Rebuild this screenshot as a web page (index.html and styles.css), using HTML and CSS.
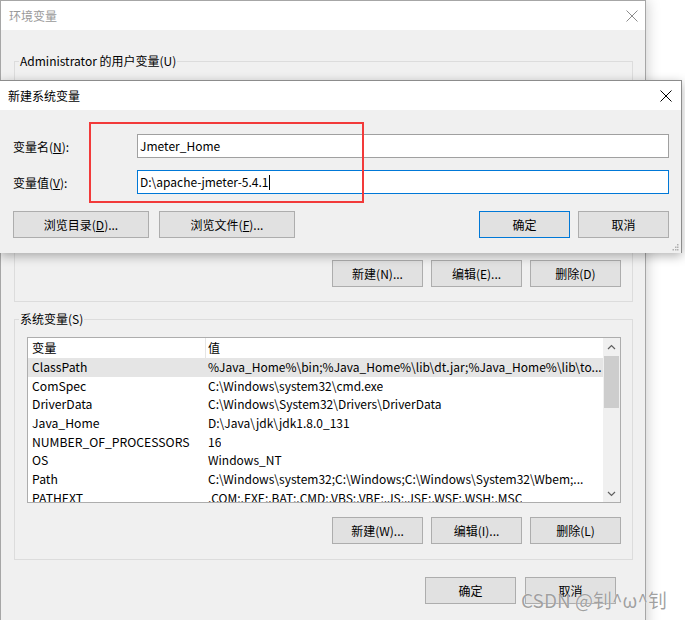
FILE: index.html
```html
<html><head><title>环境变量</title>
<link rel="stylesheet" href="styles.css">
</head>
<body>
  <div class="env-window">
    <div class="title-bar">
      <span class="title inactive">环境变量</span>
      <svg class="close" width="12" height="12" viewBox="0 0 12 12"><path d="M0.5 0.5L11.5 11.5M11.5 0.5L0.5 11.5" stroke="#8c8c8c" stroke-width="1" fill="none"/></svg>
    </div>
    <div class="window-body">
      <fieldset class="group user-group">
        <legend>Administrator 的用户变量(U)</legend>
        <div class="list"></div>
        <div class="btn-row">
          <button class="btn">新建(N)...</button>
          <button class="btn">编辑(E)...</button>
          <button class="btn">删除(D)</button>
        </div>
      </fieldset>

      <fieldset class="group sys-group">
        <legend>系统变量(S)</legend>
        <div class="list">
          <div class="list-rows">
            <div class="row head"><span class="col-name">变量</span><span class="col-value">值</span></div>
            <div class="row selected"><span class="col-name">ClassPath</span><span class="col-value">%Java_Home%\bin;%Java_Home%\lib\dt.jar;%Java_Home%\lib\to...</span></div>
            <div class="row"><span class="col-name">ComSpec</span><span class="col-value">C:\Windows\system32\cmd.exe</span></div>
            <div class="row"><span class="col-name">DriverData</span><span class="col-value">C:\Windows\System32\Drivers\DriverData</span></div>
            <div class="row"><span class="col-name">Java_Home</span><span class="col-value">D:\Java\jdk\jdk1.8.0_131</span></div>
            <div class="row"><span class="col-name">NUMBER_OF_PROCESSORS</span><span class="col-value">16</span></div>
            <div class="row"><span class="col-name">OS</span><span class="col-value">Windows_NT</span></div>
            <div class="row"><span class="col-name">Path</span><span class="col-value">C:\Windows\system32;C:\Windows;C:\Windows\System32\Wbem;...</span></div>
            <div class="row"><span class="col-name">PATHEXT</span><span class="col-value">.COM;.EXE;.BAT;.CMD;.VBS;.VBE;.JS;.JSE;.WSF;.WSH;.MSC</span></div>
          </div>
          <div class="scrollbar">
            <div class="arrow"><svg width="9" height="6" viewBox="0 0 9 6"><path d="M1 5L4.5 1.5L8 5" stroke="#606060" stroke-width="1.2" fill="none"/></svg></div>
            <div class="track"><div class="thumb"></div></div>
            <div class="arrow"><svg width="9" height="6" viewBox="0 0 9 6"><path d="M1 1L4.5 4.5L8 1" stroke="#606060" stroke-width="1.2" fill="none"/></svg></div>
          </div>
        </div>
        <div class="btn-row">
          <button class="btn">新建(W)...</button>
          <button class="btn">编辑(I)...</button>
          <button class="btn">删除(L)</button>
        </div>
      </fieldset>

      <div class="btn-row footer">
        <button class="btn">确定</button>
        <button class="btn">取消</button>
      </div>
    </div>
  </div>

  <div class="dialog">
    <div class="title-bar">
      <span class="title">新建系统变量</span>
      <svg class="close" width="12" height="12" viewBox="0 0 12 12"><path d="M0.5 0.5L11.5 11.5M11.5 0.5L0.5 11.5" stroke="#000" stroke-width="1" fill="none"/></svg>
    </div>
    <div class="dialog-body">
      <div class="form">
        <label>变量名(<u>N</u>):</label>
        <div class="input">Jmeter_Home</div>
        <label>变量值(<u>V</u>):</label>
        <div class="input focused">D:\apache-jmeter-5.4.1<span class="caret"></span></div>
      </div>
      <div class="dialog-buttons">
        <button class="btn wide">浏览目录(<u>D</u>)...</button>
        <button class="btn wide">浏览文件(<u>F</u>)...</button>
        <button class="btn default push">确定</button>
        <button class="btn">取消</button>
      </div>
      <svg class="grip" width="7" height="7" viewBox="0 0 7 7"><g fill="#b0b0b0"><rect x="5" y="0" width="1.5" height="1.5"/><rect x="3" y="2.5" width="1.5" height="1.5"/><rect x="5" y="2.5" width="1.5" height="1.5"/><rect x="0.5" y="5" width="1.5" height="1.5"/><rect x="3" y="5" width="1.5" height="1.5"/><rect x="5" y="5" width="1.5" height="1.5"/></g></svg>
    </div>
  </div>

  <div class="highlight"></div>
  <div class="watermark">CSDN @钊^ω^钊</div>
</body>
</html>
```

FILE: styles.css
```css
  body, html {
    margin: 0;
    padding: 0;
    background: #fff;
    font-family: "Microsoft YaHei", "Noto Sans CJK SC", sans-serif;
    font-size: 12px;
    color: #000;
    height: 100%;
    overflow: hidden;
  }
  .env-window {
    width: 644px;
    height: 640px;
    border: 1px solid #a6a6a6;
    border-bottom: none;
    background: #f0f0f0;
    box-shadow: 2px 0 12px rgba(0, 0, 0, 0.18);
  }
  .title-bar {
    height: 29px;
    background: #fff;
    display: flex;
    align-items: center;
    justify-content: space-between;
    padding: 0 8px 0 8px;
  }
  .env-window .title-bar {
    padding-right: 7px;
  }
  .title.inactive {
    color: #999;
  }
  .window-body {
    padding: 0 12px 0 13px;
  }
  .group {
    margin: 0;
    min-width: 0;
    border: 1px solid #dcdcdc;
    padding: 0 11px 14px 12px;
  }
  .group legend {
    padding: 0 1px;
    margin-left: -8px;
    line-height: 16px;
  }
  .user-group {
    margin-top: 23px;
  }
  .user-group .list {
    height: 166px;
    margin-top: 12px;
  }
  .user-group .btn-row {
    margin-top: 13px;
  }
  .sys-group {
    margin-top: 9px;
    padding-bottom: 15px;
  }
  .sys-group .btn-row {
    margin-top: 14px;
  }
  .list {
    box-sizing: border-box;
    height: 166px;
    margin-top: 10px;
    border: 1px solid #adadad;
    background: #fff;
    display: flex;
    overflow: hidden;
  }
  .list-rows {
    flex-grow: 1;
    min-width: 0;
    overflow: hidden;
  }
  .row {
    display: flex;
    height: 18.67px;
    line-height: 18.67px;
    white-space: nowrap;
  }
  .row.head {
    height: 20px;
    line-height: 20px;
  }
  .row.selected {
    background: #e5e5e5;
  }
  .col-name {
    width: 173px;
    padding-left: 4px;
    flex-shrink: 0;
    font-size: 12.2px;
  }
  .head .col-name {
    border-right: 1px solid #e5e5e5;
  }
  .col-value {
    padding-left: 3px;
    overflow: hidden;
  }
  .head .col-value {
    padding-left: 2px;
  }
  .scrollbar {
    width: 17px;
    flex-shrink: 0;
    background: #f0f0f0;
    display: flex;
    flex-direction: column;
  }
  .arrow {
    height: 17px;
    display: flex;
    align-items: center;
    justify-content: center;
  }
  .track {
    flex-grow: 1;
  }
  .thumb {
    height: 52px;
    margin: 1px 1px 0 1px;
    background: #cdcdcd;
  }
  .btn-row {
    display: flex;
    justify-content: flex-end;
    gap: 8px;
  }
  .btn {
    box-sizing: border-box;
    width: 91px;
    height: 27px;
    padding: 0;
    border: 1px solid #adadad;
    background: #e1e1e1;
    font-family: inherit;
    font-size: 12px;
    color: #000;
  }
  .footer {
    margin-top: 17px;
    margin-right: 17px;
    gap: 9px;
  }
  .dialog {
    position: absolute;
    top: 80px;
    left: 0;
    width: 681px;
    border-top: 1px solid #8c8c8c;
    border-right: 1px solid #8c8c8c;
    background: #f0f0f0;
    box-shadow: 0 3px 10px rgba(0, 0, 0, 0.3);
  }
  .dialog .title-bar {
    padding-right: 9px;
  }
  .dialog-body {
    position: relative;
    padding: 24px 12px 15px 13px;
  }
  .form {
    display: grid;
    grid-template-columns: 124px 1fr;
    row-gap: 12px;
    align-items: center;
  }
  .input {
    box-sizing: border-box;
    height: 24px;
    line-height: 22px;
    border: 1px solid #a0a0a0;
    background: #fff;
    padding-left: 2px;
    font-size: 12px;
  }
  .input.focused {
    border-color: #0078d7;
  }
  .caret {
    display: inline-block;
    width: 1px;
    height: 15px;
    margin-left: 1px;
    background: #000;
    vertical-align: -3px;
  }
  .dialog-buttons {
    display: flex;
    gap: 8px;
    margin-top: 17px;
  }
  .btn.wide {
    width: 136px;
    margin-right: 2px;
  }
  .btn.default {
    border-color: #0078d7;
  }
  .push {
    margin-left: auto;
  }
  .grip {
    position: absolute;
    right: 2px;
    bottom: 2px;
  }
  .highlight {
    position: absolute;
    left: 89px;
    top: 122px;
    width: 271px;
    height: 77px;
    border: 2px solid #f23a3a;
  }
  .watermark {
    position: absolute;
    left: 521px;
    top: 587px;
    font-size: 19px;
    line-height: 26px;
    color: rgba(130, 130, 130, 0.75);
    text-shadow: 0 0 1px #fff;
    white-space: nowrap;
  }
```
